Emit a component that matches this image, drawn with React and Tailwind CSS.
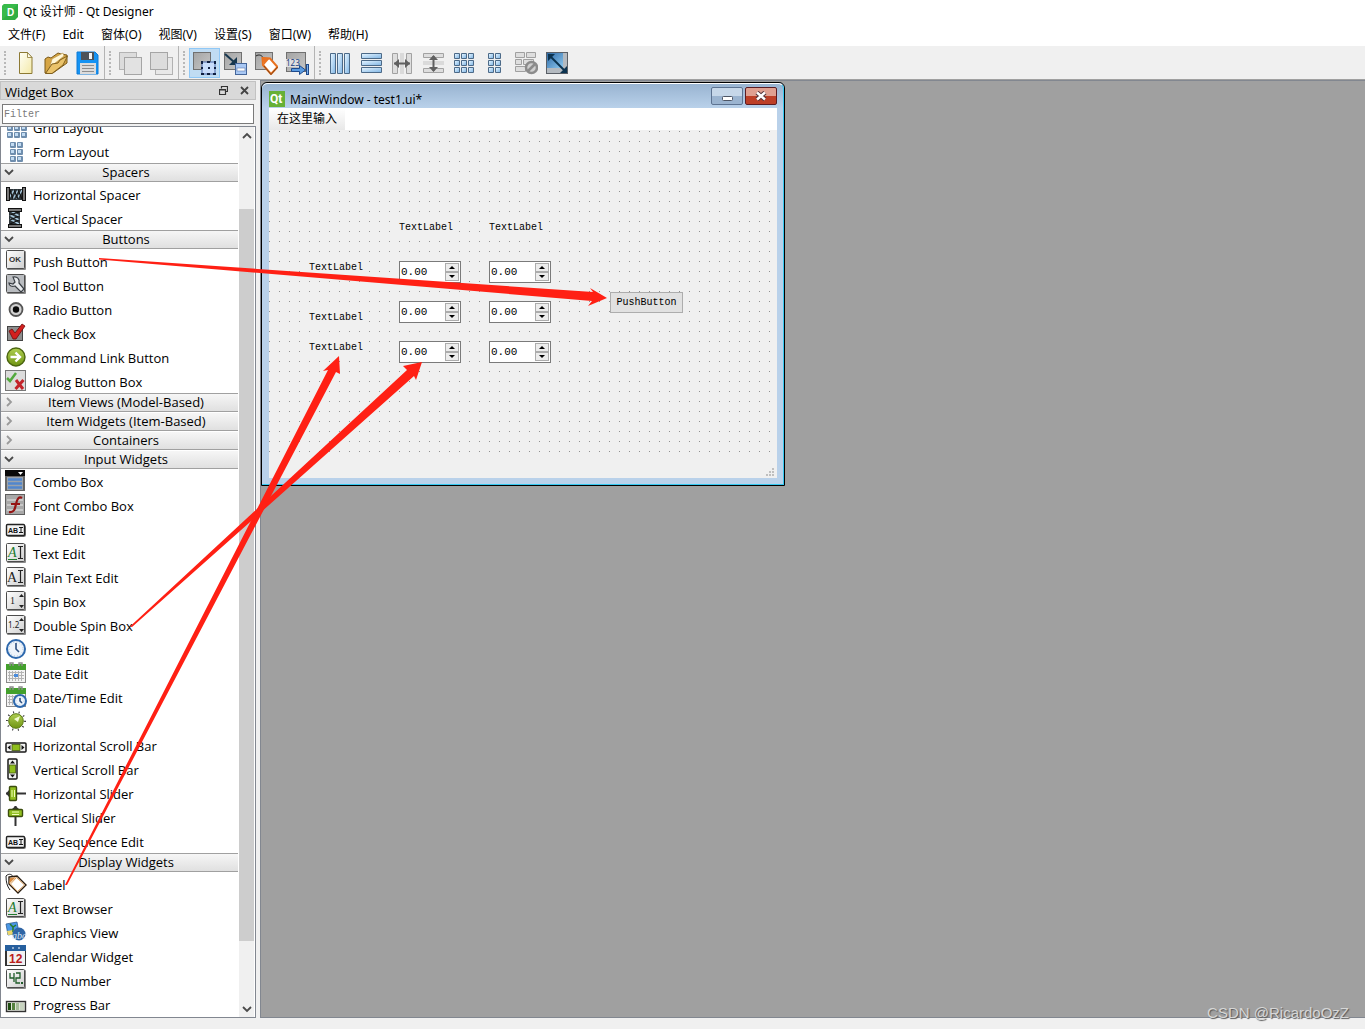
import React from "react";

/* ---------- toolbar icons (24 x 24) ---------- */
function Svg24({ children }) {
  return (
    <svg width="24" height="24" viewBox="0 0 24 24" aria-hidden="true">
      {children}
    </svg>
  );
}

function GraySquare({ x = 1, y = 1, s = 18 }) {
  return (
    <g>
      <rect x={x} y={y} width={s} height={s} fill="#707070" />
      <rect x={x + 1} y={y + 1} width={s - 2} height={s - 2} fill="url(#metal)" />
    </g>
  );
}

const cells = (cols, rows, x0) =>
  cols.flatMap((c) => rows.map((r) => ({ x: x0 + c * 7, y: 2 + r * 7 })));

function BlueBar({ x, y, w, h }) {
  return (
    <g>
      <rect x={x} y={y} width={w} height={h} rx="1" fill="#4c6a88" />
      <rect x={x + 1} y={y + 1} width={w - 2} height={h - 2} fill="url(#blueGlass)" />
    </g>
  );
}

const toolbarIcons = {
  New: (
    <Svg24>
      <path d="M6.500 1.500h8l4.500 5V22.500H6.500z" fill="url(#paper)" stroke="#8d7a34" />
      <path d="M14.500 1.500v5h4.500z" fill="#fffef0" stroke="#8d7a34" strokeWidth=".8" />
    </Svg24>
  ),
  Open: (
    <Svg24>
      <path d="M1 22V8l3-2 3 1 7-5 3 1 6 1v8L9 22z" fill="#d6a545" stroke="#7b5a1b" />
      <path d="M5 19 8 8l11-6 1 3-10 8z" fill="#fff7d8" stroke="#b89243" strokeWidth=".6" />
      <path d="M1.500 22.500 8 13l6-1 2-3 7.500-4L19 14 8 22.500z" fill="#eac36b" stroke="#80601f" />
    </Svg24>
  ),
  Save: (
    <Svg24>
      <path d="M2 1h18l3 3v19H2z" fill="#1593f3" stroke="#0f7ad6" />
      <rect x="6" y="1" width="13" height="8" fill="#4c5259" />
      <rect x="14" y="2" width="3" height="6" fill="#f4f4f4" />
      <rect x="5" y="12" width="16" height="11" fill="#dcdcdc" />
      <path d="M7 14.500h12M7 17.500h12M7 20.500h12" stroke="#8d8d8d" />
    </Svg24>
  ),
  "Send to Back": (
    <Svg24>
      <rect x="1.500" y="1.500" width="17" height="17" fill="#dcdcdc" stroke="#b2b2b2" />
      <rect x="6.500" y="6.500" width="17" height="17" fill="#e2e2e2" stroke="#a5a5a5" />
    </Svg24>
  ),
  "Bring to Front": (
    <Svg24>
      <rect x="6.500" y="6.500" width="17" height="17" fill="#e8e8e8" stroke="#b2b2b2" />
      <rect x="1.500" y="1.500" width="17" height="17" fill="#dcdcdc" stroke="#a5a5a5" />
    </Svg24>
  ),
  "Edit Widgets": (
    <Svg24>
      <GraySquare />
      <rect x="10" y="11" width="13" height="12" fill="#c8dcfa" stroke="#4a67a5" />
      <g fill="#101f40">
        <rect x="9" y="10" width="2" height="3" />
        <rect x="15" y="10" width="3" height="2" />
        <rect x="22" y="10" width="2" height="3" />
        <rect x="9" y="16" width="2" height="2" />
        <rect x="22" y="16" width="2" height="2" />
        <rect x="9" y="22" width="3" height="2" />
        <rect x="15" y="22" width="3" height="2" />
        <rect x="21" y="22" width="3" height="2" />
        <rect x="16" y="16" width="2" height="2" />
      </g>
    </Svg24>
  ),
  "Edit Signals/Slots": (
    <Svg24>
      <GraySquare />
      <path d="M2 3 11 11" stroke="#17374f" strokeWidth="2" />
      <path d="M14 6v8H6l3-3 2-2z" fill="#17374f" />
      <rect x="12.500" y="12.500" width="11" height="11" fill="#a9c8f4" stroke="#45669a" />
      <rect x="14" y="17" width="8" height="3" fill="#fff" stroke="#5c7bb0" strokeWidth=".6" />
    </Svg24>
  ),
  "Edit Buddies": (
    <Svg24>
      <GraySquare />
      <path d="M2 5c3-2 6-1 8 3" fill="none" stroke="#222" />
      <path d="M8.500 7 16 7.500 23.500 16 17 23 9 14z" fill="#fff" stroke="#e8711f" strokeWidth="2" />
      <path d="M8 6.500 16 7l-6 7z" fill="#ea7322" />
      <path d="M10 15 17 23.500 23.500 16" fill="none" stroke="#6a3a18" strokeWidth=".8" />
    </Svg24>
  ),
  "Edit Tab Order": (
    <Svg24>
      <GraySquare x={1} s={20} />
      <rect x="1" y="8" width="13" height="8" fill="#e0e0e0" />
      <text x="1" y="15" fontSize="8" fill="#1a3f80" fontFamily="Noto Sans, sans-serif">123</text>
      <path d="M6.500 17.500h8v-3l6 4.500-6 4.500v-3h-8z" fill="#5a9be0" stroke="#1f4a8c" />
      <rect x="21.500" y="13.500" width="2" height="10" fill="#7db1ec" stroke="#1f4a8c" />
    </Svg24>
  ),
  "Lay Out Horizontally": (
    <Svg24>
      <BlueBar x={2} y={2} w={6} h={21} />
      <BlueBar x={9} y={2} w={6} h={21} />
      <BlueBar x={16} y={2} w={6} h={21} />
    </Svg24>
  ),
  "Lay Out Vertically": (
    <Svg24>
      <BlueBar x={2} y={2} w={21} h={6} />
      <BlueBar x={2} y={9} w={21} h={6} />
      <BlueBar x={2} y={16} w={21} h={6} />
    </Svg24>
  ),
  "Horizontal Splitter": (
    <Svg24>
      <g fill="#dedede" stroke="#a2a2a2">
        <path d="M2.500 2.500h5v20h-5zM16.500 2.500h5v20h-5z" />
      </g>
      <path d="M11 2v21M13 2v21" stroke="#c4c4c4" />
      <path d="M4 12.500h16" stroke="#606060" strokeWidth="2" />
      <path d="M4 12.500 9 8v9zM20 12.500 15 8v9z" fill="#606060" />
    </Svg24>
  ),
  "Vertical Splitter": (
    <Svg24>
      <g fill="#dedede" stroke="#a2a2a2">
        <path d="M2.500 2.500h20v4h-20zM2.500 17.500h20v4h-20z" />
      </g>
      <path d="M2 11h21M2 13h21" stroke="#c4c4c4" />
      <path d="M12.500 5v15" stroke="#606060" strokeWidth="2" />
      <path d="M12.500 4 17 9H8zM12.500 21 17 16H8z" fill="#606060" />
    </Svg24>
  ),
  "Lay Out in a Grid": (
    <Svg24>
      {cells([0, 1, 2], [0, 1, 2], 2).map((c) => (
        <BlueBar key={c.x + "-" + c.y} x={c.x} y={c.y} w={6} h={6} />
      ))}
    </Svg24>
  ),
  "Lay Out in a Form": (
    <Svg24>
      {cells([0, 1], [0, 1, 2], 5).map((c) => (
        <BlueBar key={c.x + "-" + c.y} x={c.x} y={c.y} w={6} h={6} />
      ))}
    </Svg24>
  ),
  "Break Layout": (
    <Svg24>
      <g fill="#dedede" stroke="#a0a0a0">
        <path d="M1.500 1.500h9v5h-9zM12.500 1.500h9v5h-9zM1.500 8.500h6v5h-6zM9.500 8.500h10v5h-10zM1.500 15.500h10v5h-10z" />
      </g>
      <circle cx="17.500" cy="16.500" r="5.500" fill="#cfcfcf" stroke="#8b8b8b" strokeWidth="2.500" />
      <path d="M13.500 20.500 21.500 12.500" stroke="#8b8b8b" strokeWidth="2.500" />
    </Svg24>
  ),
  "Adjust Size": (
    <Svg24>
      <rect x="1" y="1" width="22" height="22" fill="#5a5f66" />
      <rect x="2" y="2" width="20" height="20" fill="#b4bac0" />
      <rect x="2" y="2" width="16" height="15" fill="url(#deepBlue)" />
      <path d="M6 6 19 19" stroke="#0b3350" strokeWidth="2" />
      <path d="M3 3h7L3 10zM22 22v-7l-7 7z" fill="#0b3350" />
    </Svg24>
  ),
};

/* ---------- widget box icons (22 x 22) ---------- */
function Tile({ y = 1, h = 19 }) {
  return (
    <g>
      <rect x="2" y={y + 1} width="19" height={h} rx="1" fill="#8a8a8a" />
      <rect x="1.500" y={y + 0.5} width="18" height={h - 1} rx="1" fill="url(#tile)" stroke="#4c4c4c" />
    </g>
  );
}

function CalendarBase() {
  return (
    <g>
      <rect x="1.500" y="3.500" width="19" height="17" fill="#f4f4f4" stroke="#8a8a8a" />
      <rect x="1" y="2" width="20" height="6" fill="#43a02c" />
      <path d="M5 4V1h3v3M14 4V1h3v3" fill="none" stroke="#8c8c8c" strokeWidth="1.400" />
      <path d="M3 10.500h16M3 13.500h16M3 16.500h16M4.500 9v10M7.500 9v10M10.500 9v10M13.500 9v10M16.500 9v10" stroke="#b4b4b4" />
    </g>
  );
}

function Clock({ cx, cy, r }) {
  return (
    <g>
      <circle cx={cx} cy={cy} r={r} fill="#eef4fb" stroke="#2d68ad" strokeWidth="2" />
      <circle cx={cx} cy={cy} r={r - 2} fill="none" stroke="#9db6d2" strokeWidth=".8" strokeDasharray="1 2" />
      <path d={`M${cx} ${cy - r + 3}V${cy}l${r / 3} ${r / 3}`} fill="none" stroke="#2c4f80" strokeWidth="1.600" />
    </g>
  );
}

const spring = (
  <g>
    <rect x="3" y="6" width="16" height="11" fill="#2c3338" />
    <path d="M4 15l5-8M8 16l5-9M12 16l5-9" stroke="#a9c9dd" strokeWidth="1.500" />
    <path d="M5 7l3 9M9 7l4 9M13 7l4 9" stroke="#111" strokeWidth="1.200" />
    <rect x="1.500" y="4.500" width="3" height="13" fill="#777" stroke="#111" />
    <rect x="17.500" y="4.500" width="3" height="13" fill="#777" stroke="#111" />
  </g>
);

const abi = (
  <g>
    <rect x="2" y="7" width="19" height="12" rx="2" fill="#777" />
    <rect x="1.500" y="6.500" width="18" height="11" rx="1" fill="#f2f2f2" stroke="#222" strokeWidth="1.400" />
    <text x="3" y="15" fontSize="7" fontWeight="bold" fill="#111" fontFamily="Liberation Sans, sans-serif">AB</text>
    <path d="M14 9.500h4M14 14.500h4M16 9.500v5" stroke="#111" />
  </g>
);

const textEdit = (
  <g>
    <Tile />
    <text x="3" y="15" fontSize="14" fontStyle="italic" fill="#217a2e" fontFamily="Liberation Serif, serif">A</text>
    <path d="M3 17.500h9" stroke="#217a2e" />
    <path d="M13 4.500h5M13 16.500h5M15.500 4.500v12" stroke="#222" strokeWidth="1.200" />
  </g>
);

const spinArrows = <path d="M14 7h5l-2.500-3zM14 15h5l-2.500 3z" fill="#222" />;

const hScroll = (
  <g>
    <rect x="1" y="7" width="20" height="9" rx="1" fill="#f2f2f2" stroke="#1a1a1a" strokeWidth="1.500" />
    <path d="M5.500 9v5L2.500 11.500zM16.500 9v5l3-2.500z" fill="#111" />
    <rect x="7" y="8.500" width="8" height="6" fill="#8fbe1d" stroke="#41590b" strokeWidth=".8" />
  </g>
);

const hSlider = (
  <g>
    <path d="M1 11.500h20" stroke="#333" strokeWidth="2" />
    <path d="M4 8v7l-3-3.500z" fill="#333" />
    <rect x="4.500" y="4.500" width="7" height="14" rx="1" fill="#91bf20" stroke="#3b4d0d" strokeWidth="1.400" />
    <path d="M7 8v7M9.500 8v7" stroke="#f1ffb8" />
  </g>
);

const formCells = (cols, x0) =>
  cols.flatMap((c) =>
    [0, 1, 2].map((r) => (
      <g key={c + "-" + r}>
        <rect x={x0 + c * 7} y={2 + r * 7} width="6" height="6" rx="1" fill="#6f8eae" />
        <rect x={x0 + 1 + c * 7} y={3 + r * 7} width="3" height="3" fill="#c2dbf2" />
      </g>
    ))
  );

const widgetIcons = {
  "Grid Layout": <g>{formCells([0, 1, 2], 2)}</g>,
  "Form Layout": <g>{formCells([0, 1], 5)}</g>,
  "Horizontal Spacer": spring,
  "Vertical Spacer": <g transform="translate(21 0) rotate(90)">{spring}</g>,
  "Push Button": (
    <g>
      <Tile y={0} />
      <text x="4" y="12" fontSize="8" fontWeight="bold" fill="#333" fontFamily="Liberation Sans, sans-serif">OK</text>
    </g>
  ),
  "Tool Button": (
    <g>
      <Tile y={0} />
      <rect x="2" y="1" width="17" height="17" fill="#b9bcc0" />
      <path d="M8 3c4-1 7 2 6 6l5 6-3 3-6-6c-3 1-6 0-6-3l4 1 2-2z" fill="#e6e9ec" stroke="#3a3f45" strokeWidth="1.200" />
    </g>
  ),
  "Radio Button": (
    <g>
      <circle cx="11" cy="11.500" r="6.500" fill="#d2d2d2" stroke="#555" strokeWidth="1.800" />
      <circle cx="11" cy="11.500" r="3.200" fill="#0a0a0a" />
    </g>
  ),
  "Check Box": (
    <g>
      <rect x="2.500" y="4.500" width="15" height="14" fill="#8d8d8d" stroke="#444" />
      <path d="M4 9l3-2 3 4 7-9 3 2L11 17H8z" fill="#d3201f" stroke="#6d0b0b" strokeWidth=".8" />
    </g>
  ),
  "Command Link Button": (
    <g>
      <circle cx="11" cy="11" r="9" fill="url(#green)" stroke="#4b6510" strokeWidth="1.400" />
      <path d="M5.500 11h9M10.500 6.500 15 11l-4.500 4.500" fill="none" stroke="#fff" strokeWidth="2.400" />
    </g>
  ),
  "Dialog Button Box": (
    <g>
      <rect x=".500" y=".500" width="20" height="20" fill="#dcdcdc" stroke="#777" />
      <path d="M2 8l3 3 6-8" fill="none" stroke="#52a83c" strokeWidth="2.500" />
      <path d="M11 10l7 9M18.500 10l-8 9" stroke="#c3242a" strokeWidth="3" />
    </g>
  ),
  "Combo Box": (
    <g>
      <rect x="0" y="0" width="20" height="21" fill="#666" />
      <rect x="0" y="0" width="20" height="6" fill="#0a0a0a" />
      <path d="M13 2h5l-2.500 3z" fill="#fff" />
      <rect x="2" y="7" width="16" height="13" fill="#9aa2ab" />
      <path d="M3 9.500h14M3 13.500h14M3 17.500h14" stroke="#5186cd" strokeWidth="2.500" />
    </g>
  ),
  "Font Combo Box": (
    <g>
      <rect x=".500" y=".500" width="19" height="20" fill="#a8a8a8" stroke="#5f5f5f" />
      <path d="M2 6h16M2 11h16M2 16h16" stroke="#c8c8c8" strokeWidth="2" />
      <path d="M17 4c-3-2-5 1-6 6s-2 9-7 8M6 10h9" fill="none" stroke="#951414" strokeWidth="2.200" />
    </g>
  ),
  "Line Edit": abi,
  "Text Edit": textEdit,
  "Plain Text Edit": (
    <g>
      <Tile />
      <text x="2" y="16" fontSize="14" fill="#222" fontFamily="Liberation Serif, serif">A</text>
      <path d="M13 4.500h5M13 16.500h5M15.500 4.500v12" stroke="#222" strokeWidth="1.200" />
    </g>
  ),
  "Spin Box": (
    <g>
      <Tile />
      <text x="5" y="14" fontSize="10" fill="#222" fontFamily="Liberation Serif, serif">1</text>
      {spinArrows}
    </g>
  ),
  "Double Spin Box": (
    <g>
      <Tile />
      <text x="3" y="14" fontSize="8" fill="#222" fontFamily="Noto Sans, sans-serif">1.2</text>
      {spinArrows}
    </g>
  ),
  "Time Edit": <Clock cx={11} cy={11} r={9} />,
  "Date Edit": (
    <g>
      <CalendarBase />
      <rect x="9" y="12" width="4" height="3" fill="#4b8cdc" />
    </g>
  ),
  "Date/Time Edit": (
    <g>
      <CalendarBase />
      <Clock cx={15} cy={15} r={6} />
    </g>
  ),
  Dial: (
    <g>
      <circle cx="11" cy="11" r="9" fill="none" stroke="#333" strokeWidth="2" strokeDasharray="1 4.600" />
      <circle cx="11" cy="11" r="7.300" fill="url(#green)" stroke="#597a12" />
      <path d="M15 6l-2 6-4-3z" fill="#f2fbd0" />
    </g>
  ),
  "Horizontal Scroll Bar": <g transform="translate(0 2)">{hScroll}</g>,
  "Vertical Scroll Bar": <g transform="translate(19 0) rotate(90)">{hScroll}</g>,
  "Horizontal Slider": hSlider,
  "Vertical Slider": <g transform="translate(22 -1) rotate(90)">{hSlider}</g>,
  "Key Sequence Edit": abi,
  Label: (
    <g>
      <path d="M1 3c3-3 6-2 8 2M1 3c0 6 1 10 4 14" fill="none" stroke="#222" />
      <path d="M4 4l8-1 9 9-8 8-9-9z" fill="#fff" stroke="#2a1d10" strokeWidth="1.400" />
      <path d="M5 5l6-1-7 7z" fill="#d98b3f" />
      <path d="M11.500 4.500 19.500 12l-7 6.500L5.500 11z" fill="none" stroke="#dba15f" />
    </g>
  ),
  "Text Browser": textEdit,
  "Graphics View": (
    <g>
      <path d="M1 3l11-2 2 11-11 2z" fill="#4a97e6" stroke="#2d5c93" strokeWidth=".8" />
      <path d="M2 10l12-2v5l-11 1z" fill="#ecd66a" />
      <path d="M5 3l3 3 3-2M8 5v6" stroke="#267a29" strokeWidth="1.500" fill="none" />
      <circle cx="14" cy="13" r="6.500" fill="#2f65a5" />
      <text x="7" y="18" fontSize="10" fontStyle="italic" fill="#dce8f6" fontFamily="Liberation Serif, serif">abc</text>
    </g>
  ),
  "Calendar Widget": (
    <g>
      <rect x=".500" y=".500" width="20" height="20" fill="#f2f2f2" stroke="#333" />
      <rect x="0" y="0" width="21" height="6" fill="#265f9e" />
      <path d="M0 6h2v15H0z" fill="#333" />
      <path d="M7 3h2M13 3h2" stroke="#fff" />
      <text x="4" y="18" fontSize="12" fontWeight="bold" fill="#ba201c" fontFamily="Liberation Sans, sans-serif">12</text>
    </g>
  ),
  "LCD Number": (
    <g>
      <Tile y={0} />
      <path d="M5 4v5h4M9 4v9M11 4h4v5h-4v5h4" fill="none" stroke="#1f5c2a" strokeWidth="1.300" />
      <rect x="16" y="13" width="2" height="2" fill="#1f5c2a" />
    </g>
  ),
  "Progress Bar": (
    <g>
      <rect x="1.500" y="8.500" width="19" height="10" fill="#dfe3da" stroke="#333" strokeWidth="1.400" />
      <path d="M3 10h3v7H3z" fill="#1f4d10" />
      <path d="M7 10h3v7H7z" fill="#55823f" />
      <path d="M11 10h3v7h-3z" fill="#a5bd98" />
      <path d="M15 10h4v7h-4z" fill="#c8d4c0" />
    </g>
  ),
};

const SharedGradients = () => (
  <svg width="0" height="0" className="absolute" aria-hidden="true">
    <defs>
      <linearGradient id="metal" x1="0" y1="0" x2="1" y2="1">
        <stop offset="0" stopColor="#a5a5a5" />
        <stop offset="1" stopColor="#c6c6c6" />
      </linearGradient>
      <linearGradient id="paper" x1="0" y1="0" x2="1" y2="1">
        <stop offset="0" stopColor="#fffff6" />
        <stop offset="1" stopColor="#f3e9a8" />
      </linearGradient>
      <linearGradient id="blueGlass" x1="0" y1="0" x2="1" y2="1">
        <stop offset="0" stopColor="#e2f3ff" />
        <stop offset="1" stopColor="#86b9e6" />
      </linearGradient>
      <linearGradient id="deepBlue" x1="0" y1="0" x2="1" y2="1">
        <stop offset="0" stopColor="#2f6aa6" />
        <stop offset="1" stopColor="#8cc8f0" />
      </linearGradient>
      <linearGradient id="tile" x1="0" y1="0" x2="1" y2="1">
        <stop offset="0" stopColor="#ffffff" />
        <stop offset="1" stopColor="#cfcfcf" />
      </linearGradient>
      <linearGradient id="green" x1="0" y1="0" x2="0" y2="1">
        <stop offset="0" stopColor="#b0cf52" />
        <stop offset="1" stopColor="#6f9412" />
      </linearGradient>
    </defs>
  </svg>
);

/* ---------- data ---------- */
const menus = ["文件(F)", "Edit", "窗体(O)", "视图(V)", "设置(S)", "窗口(W)", "帮助(H)"];

const toolGroups = [
  ["New", "Open", "Save"],
  ["Send to Back", "Bring to Front"],
  ["Edit Widgets", "Edit Signals/Slots", "Edit Buddies", "Edit Tab Order"],
  [
    "Lay Out Horizontally",
    "Lay Out Vertically",
    "Horizontal Splitter",
    "Vertical Splitter",
    "Lay Out in a Grid",
    "Lay Out in a Form",
    "Break Layout",
    "Adjust Size",
  ],
];

const categories = [
  { items: ["Grid Layout", "Form Layout"] },
  { title: "Spacers", open: true, items: ["Horizontal Spacer", "Vertical Spacer"] },
  {
    title: "Buttons",
    open: true,
    items: ["Push Button", "Tool Button", "Radio Button", "Check Box", "Command Link Button", "Dialog Button Box"],
  },
  { title: "Item Views (Model-Based)", items: [] },
  { title: "Item Widgets (Item-Based)", afterClosed: true, items: [] },
  { title: "Containers", afterClosed: true, items: [] },
  {
    title: "Input Widgets",
    open: true,
    afterClosed: true,
    items: [
      "Combo Box",
      "Font Combo Box",
      "Line Edit",
      "Text Edit",
      "Plain Text Edit",
      "Spin Box",
      "Double Spin Box",
      "Time Edit",
      "Date Edit",
      "Date/Time Edit",
      "Dial",
      "Horizontal Scroll Bar",
      "Vertical Scroll Bar",
      "Horizontal Slider",
      "Vertical Slider",
      "Key Sequence Edit",
    ],
  },
  {
    title: "Display Widgets",
    open: true,
    items: ["Label", "Text Browser", "Graphics View", "Calendar Widget", "LCD Number", "Progress Bar"],
  },
];

const formLabels = [
  "left-[130px] top-[90px]",
  "left-[220px] top-[90px]",
  "left-[40px] top-[130px]",
  "left-[40px] top-[180px]",
  "left-[40px] top-[210px]",
];

const spinBoxes = [
  "left-[130px] top-[131px]",
  "left-[220px] top-[131px]",
  "left-[130px] top-[171px]",
  "left-[220px] top-[171px]",
  "left-[130px] top-[211px]",
  "left-[220px] top-[211px]",
];

/* ---------- parts ---------- */
function TitleBar() {
  return (
    <header className="flex h-6 items-center gap-1 bg-white pl-[2px] text-xs">
      <svg width="16" height="16" viewBox="0 0 16 16" aria-hidden="true">
        <path d="M2 0h14v13l-3 3H0V2z" fill="#2fae42" />
        <path d="M0 16V2l2-2h14z" fill="#41c552" opacity=".5" />
        <text x="5" y="12" fontSize="10" fontWeight="bold" fill="#fff" fontFamily="Liberation Sans, sans-serif">D</text>
      </svg>
      <h1 className="pl-px">Qt 设计师 - Qt Designer</h1>
    </header>
  );
}

function MenuBar() {
  return (
    <nav className="flex h-[22px] items-center gap-[17px] bg-white pl-2 text-xs">
      {menus.map((m) => (
        <button key={m} type="button">{m}</button>
      ))}
    </nav>
  );
}

function ToolBar() {
  return (
    <div className="flex h-[34px] border-b border-[#a0a0a0] bg-[#f0f0f0]" role="toolbar">
      {toolGroups.map((group, i) => (
        <div
          key={group[0]}
          className={"flex items-center pr-px " + (i < 3 ? "border-r border-[#b4b4b4]" : "")}
        >
          <span className="flex h-6 w-2.5 justify-center">
            <span className="h-full w-0 border-l-2 border-dotted border-[#b8b8b8]" />
          </span>
          {group.map((name) => (
            <button
              key={name}
              type="button"
              aria-label={name}
              className={
                "flex h-[30px] w-[31px] items-center justify-center border pr-px " +
                (name === "Edit Widgets" ? "border-[#90c8f6] bg-[#c0dcf3]" : "border-transparent")
              }
            >
              {toolbarIcons[name]}
            </button>
          ))}
        </div>
      ))}
    </div>
  );
}

function Chevron({ dir }) {
  const d = { down: "M1 3l4 4 4-4", up: "M1 7l4-4 4 4", right: "M3 1l4 4-4 4" }[dir];
  return (
    <svg width="10" height="10" viewBox="0 0 10 10" aria-hidden="true">
      <path d={d} fill="none" stroke={dir === "right" ? "#9a9a9a" : "#4a4a4a"} strokeWidth="1.800" />
    </svg>
  );
}

function Category({ cat }) {
  return (
    <section>
      {cat.title && (
        <button
          type="button"
          className={
            "flex h-[19px] w-full items-center border-b border-b-[#a0a0a0] bg-linear-to-b from-[#f6f6f6] to-[#e0e0e0] pb-0.5 pl-[3px] " +
            (cat.afterClosed ? "border-t border-t-white" : "border-t border-t-[#a0a0a0]")
          }
        >
          <Chevron dir={cat.open ? "down" : "right"} />
          <span className="flex-1 text-center leading-4">{cat.title}</span>
        </button>
      )}
      <ul>
        {cat.items.map((name) => (
          <li key={name} className="flex h-6 items-center gap-1.5 pl-1">
            <svg width="22" height="22" viewBox="0 0 22 22" aria-hidden="true">
              {widgetIcons[name]}
            </svg>
            <span className="pt-0.5 leading-5">{name}</span>
          </li>
        ))}
      </ul>
    </section>
  );
}

function WidgetBox() {
  return (
    <aside className="flex w-64 shrink-0 flex-col pt-px font-['Open_Sans','Noto_Sans',sans-serif]">
      <div className="flex h-[19px] items-center border border-[#c2c2c2] bg-[#d9d9d9] pr-1.5 pl-1">
        <h2 className="flex-1 pt-0.5 leading-4">Widget Box</h2>
        <div className="flex gap-3">
          <button type="button" aria-label="Float">
            <svg width="9" height="9" viewBox="0 0 9 9">
              <path d="M2.500 2.500v-2h6v5h-2M.500 3.500h6v5h-6zM.500 4h6" fill="none" stroke="#333" strokeWidth="1.200" />
            </svg>
          </button>
          <button type="button" aria-label="Close">
            <svg width="9" height="9" viewBox="0 0 9 9">
              <path d="M1 1l7 7M8 1 1 8" stroke="#444" strokeWidth="1.800" />
            </svg>
          </button>
        </div>
      </div>
      <input
        type="text"
        aria-label="Filter"
        placeholder="Filter"
        className="mt-1 mr-0.5 mb-0.5 ml-0.5 h-5 border border-[#7a7a7a] bg-white px-px font-['Liberation_Mono',monospace] text-[10px] placeholder:text-[#7a7a7a]"
      />
      <div className="flex flex-1 border border-[#828790] bg-white">
        <div className="flex-1 overflow-hidden pb-px">
          <div className="-mt-3">
            {categories.map((cat) => (
              <Category key={cat.title || "Layouts"} cat={cat} />
            ))}
          </div>
        </div>
        <div className="mr-px ml-px flex w-[15px] flex-col items-stretch bg-[#f0f0f0]" role="presentation">
          <button type="button" aria-label="Scroll up" className="flex h-[17px] items-center justify-center">
            <Chevron dir="up" />
          </button>
          <span className="grow-[65]" />
          <span className="grow-[732] bg-[#cdcdcd]" />
          <span className="grow-[59]" />
          <button type="button" aria-label="Scroll down" className="flex h-[17px] items-center justify-center">
            <Chevron dir="down" />
          </button>
        </div>
      </div>
    </aside>
  );
}

function SpinBox({ place, index }) {
  return (
    <div className={"absolute flex h-[22px] w-[62px] border border-[#7a7a7a] bg-white p-px " + place}>
      <input
        type="text"
        defaultValue="0.00"
        aria-label={"Value " + (index + 1)}
        className="w-0 flex-1 bg-transparent font-['Liberation_Mono',monospace] text-[11px]"
      />
      <div className="flex w-[14px] flex-col">
        {["M1 4h6L4 1z", "M1 1h6L4 4z"].map((d, i) => (
          <button
            key={d}
            type="button"
            aria-label={i ? "Decrease" : "Increase"}
            className="flex flex-1 items-center justify-center border border-[#acacac] bg-[#ececec]"
          >
            <svg width="8" height="5" viewBox="0 0 8 5">
              <path d={d} fill="#000" />
            </svg>
          </button>
        ))}
      </div>
    </div>
  );
}

function FormWindow() {
  return (
    <div className="absolute top-px left-0 w-[524px] rounded-t-md border border-black bg-[#b9d1ea]">
      <div className="rounded-t-md border-t border-r border-b border-t-white border-r-[#35c8f0] border-b-[#35c8f0] bg-linear-to-b from-[#99b4d1] to-[#b9d1ea] to-[24px] pr-1.5 pb-1.5 pl-[7px]">
        <div className="flex h-6 items-start">
          <svg className="mt-[7px]" width="16" height="16" viewBox="0 0 16 16" aria-hidden="true">
            <rect width="16" height="16" fill="#66b036" />
            <text x="1" y="12" fontSize="12" fontWeight="bold" fill="#fff" fontFamily="Roboto, sans-serif">Qt</text>
          </svg>
          <h3 className="mt-2 ml-[5px] flex-1 text-xs leading-4">MainWindow - test1.ui*</h3>
          <div className="mt-[3px] flex gap-0.5">
            <button
              type="button"
              aria-label="Minimize"
              className="flex h-[18px] w-8 items-center justify-center rounded-xs border border-[#5d7391] bg-linear-to-b from-[#c6d7e9] from-50% to-[#9bb4d0] to-50% pt-1"
            >
              <svg width="11" height="5" viewBox="0 0 11 5">
                <rect x=".500" y=".500" width="10" height="4" rx="1" fill="#fff" stroke="#4e5666" />
              </svg>
            </button>
            <button
              type="button"
              aria-label="Close window"
              className="flex h-[18px] w-8 items-center justify-center rounded-xs border border-[#5c1c22] bg-linear-to-b from-[#e0a091] from-50% to-[#bd3f27] to-50%"
            >
              <svg width="12" height="10" viewBox="0 0 12 10">
                <path d="M2 1.500l8 7M10 1.500l-8 7" stroke="#53343a" strokeWidth="4.500" />
                <path d="M2 1.500l8 7M10 1.500l-8 7" stroke="#fff" strokeWidth="2.500" />
              </svg>
            </button>
          </div>
        </div>
        <div className="bg-[#f0f0f0]">
          <div className="flex h-[22px] bg-white">
            <button type="button" className="bg-linear-to-b from-white to-[#e8e8e8] px-2 text-xs">
              在这里输入
            </button>
          </div>
          <div className="relative h-[348px] font-['Liberation_Mono',monospace] text-[10px]">
            <div className="h-[322px] w-full bg-[linear-gradient(90deg,transparent_1px,#f0f0f0_1px),linear-gradient(#f0f0f0_1px,#909090_1px,#909090_2px,#f0f0f0_2px)] bg-[size:10px_10px]" />
            {formLabels.map((place) => (
              <span key={place} className={"absolute bg-[#f0f0f0] leading-4 " + place}>
                TextLabel
              </span>
            ))}
            {spinBoxes.map((place, i) => (
              <SpinBox key={place} place={place} index={i} />
            ))}
            <button
              type="button"
              className="absolute top-[162px] left-[341px] h-[21px] w-[73px] border border-[#adadad] bg-[#e1e1e1]"
            >
              PushButton
            </button>
            <svg className="absolute right-[3px] bottom-[2px]" width="8" height="8" viewBox="0 0 8 8" aria-hidden="true">
              <path d="M6 0h2v2H6zM3 3h2v2H3zM6 3h2v2H6zM0 6h2v2H0zM3 6h2v2H3zM6 6h2v2H6z" fill="#bfbfbf" />
            </svg>
          </div>
        </div>
      </div>
    </div>
  );
}

function Arrows() {
  return (
    <svg className="pointer-events-none absolute inset-0 h-full w-full" aria-hidden="true">
      <g fill="#ff2014">
        <path d="M99 258 593 292 590 288 607 298 588 306 592 301 99 259.500z" />
        <path d="M130 626.500 407 370 403 366 422 362 416 380 414 376 132 627z" />
        <path d="M65 885 328 370 323 371 339 356 340 374 336 372 67 885z" />
      </g>
    </svg>
  );
}

export default function App() {
  return (
    <div className="relative flex min-h-screen flex-col overflow-hidden bg-[#f0f0f0] font-['Noto_Sans','Noto_Sans_CJK_SC',sans-serif] text-[13px] text-black">
      <SharedGradients />
      <TitleBar />
      <MenuBar />
      <ToolBar />
      <div className="flex flex-1 gap-1">
        <WidgetBox />
        <main className="relative flex-1 border-t border-b border-l border-[#828790] bg-[#a0a0a0]">
          <FormWindow />
        </main>
      </div>
      <footer className="h-[11px]" />
      <Arrows />
      <span className="absolute right-4 bottom-[7px] font-['Liberation_Sans',sans-serif] text-[15px] leading-[18px] text-[#d6d6d6] [text-shadow:1px_1px_1px_#555]">
        CSDN @RicardoOzZ
      </span>
    </div>
  );
}
